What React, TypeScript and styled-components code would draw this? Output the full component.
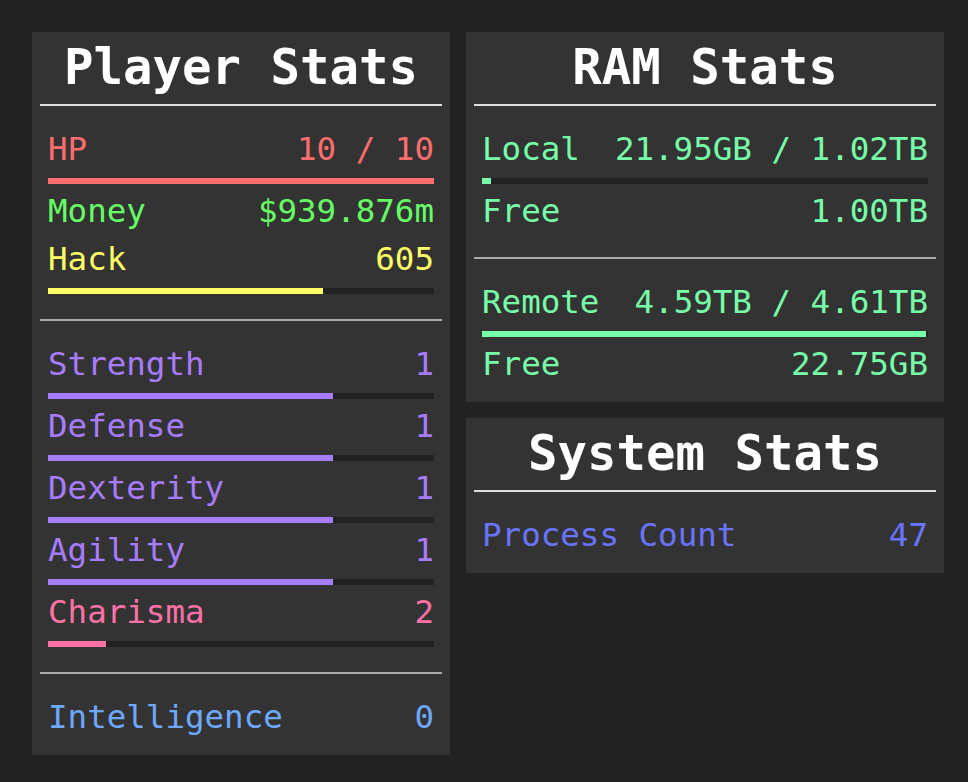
import React from "react";
import styled, { createGlobalStyle } from "styled-components";

const GlobalStyle = createGlobalStyle`
  html, body {
    margin: 0;
    padding: 0;
    background: #222222;
  }
  body {
    font-family: "DejaVu Sans Mono", "Liberation Mono", monospace;
  }
`

const Page = styled.div`
  display: flex;
  align-items: flex-start;
  gap: 16px;
  padding: 32px;
`

const Column = styled.div`
  display: flex;
  flex-direction: column;
  flex-shrink: 0;
  gap: 16px;
`

const Panel = styled.div<{ $width: number }>`
  width: ${(p) => p.$width}px;
  flex-shrink: 0;
  background: #333333;
  display: flex;
  flex-direction: column;
`

const PanelTitle = styled.h1`
  margin: 0;
  font-size: 49px;
  font-weight: bold;
  line-height: 72px;
  text-align: center;
  color: #ffffff;
`

const Divider = styled.div<{ $color?: string }>`
  height: 2px;
  margin: 0 8px;
  background: ${(p) => p.$color ?? "#aaaaaa"};
`

const Section = styled.div`
  padding: 19px 16px 22px;

  &:last-child {
    padding-bottom: 14px;
  }
`

const Row = styled.div<{ $color: string }>`
  display: flex;
  justify-content: space-between;
  font-size: 32.5px;
  line-height: 48px;
  white-space: pre;
  color: ${(p) => p.$color};
`

const Track = styled.div`
  height: 6px;
  margin: 5px 0 3px;
  background: #222222;
`

const Fill = styled.div<{ $color: string }>`
  height: 100%;
  background: ${(p) => p.$color};
`

type StatProps = {
  label: string;
  value: string;
  color: string;
  progress?: number;
}

function Stat({ label, value, color, progress }: StatProps) {
  return (
    <>
      <Row $color={color}>
        <span>{label}</span>
        <span>{value}</span>
      </Row>
      {progress !== undefined && (
        <Track>
          <Fill $color={color} style={{ width: `${progress}%` }} />
        </Track>
      )}
    </>
  )
}

const colors = {
  hp: "#ff6e6e",
  money: "#66ff66",
  hack: "#ffff66",
  combat: "#a87cff",
  cha: "#ff72a8",
  int: "#6fa8ff",
  ram: "#77ffa9",
  sys: "#6b74ff",
}

const combat = [
  { label: "Strength", value: "1" },
  { label: "Defense", value: "1" },
  { label: "Dexterity", value: "1" },
  { label: "Agility", value: "1" },
]

export default function App() {
  return (
    <>
      <GlobalStyle />
      <Page>
        <Panel $width={418}>
          <PanelTitle>Player Stats</PanelTitle>
          <Divider $color="#dddddd" />
          <Section>
            <Stat label="HP" value="10 / 10" color={colors.hp} progress={100} />
            <Stat label="Money" value="$939.876m" color={colors.money} />
            <Stat label="Hack" value="605" color={colors.hack} progress={71.2} />
          </Section>
          <Divider />
          <Section>
            {combat.map((s) => (
              <Stat key={s.label} label={s.label} value={s.value} color={colors.combat} progress={73.8} />
            ))}
            <Stat label="Charisma" value="2" color={colors.cha} progress={15} />
          </Section>
          <Divider />
          <Section>
            <Stat label="Intelligence" value="0" color={colors.int} />
          </Section>
        </Panel>
        <Column>
          <Panel $width={478}>
            <PanelTitle>RAM Stats</PanelTitle>
            <Divider $color="#dddddd" />
            <Section>
              <Stat label="Local" value="21.95GB / 1.02TB" color={colors.ram} progress={2.1} />
              <Stat label="Free" value="1.00TB" color={colors.ram} />
            </Section>
            <Divider />
            <Section>
              <Stat label="Remote" value="4.59TB / 4.61TB" color={colors.ram} progress={99.5} />
              <Stat label="Free" value="22.75GB" color={colors.ram} />
            </Section>
          </Panel>
          <Panel $width={478}>
            <PanelTitle>System Stats</PanelTitle>
            <Divider $color="#dddddd" />
            <Section>
              <Stat label="Process Count" value="47" color={colors.sys} />
            </Section>
          </Panel>
        </Column>
      </Page>
    </>
  )
}
